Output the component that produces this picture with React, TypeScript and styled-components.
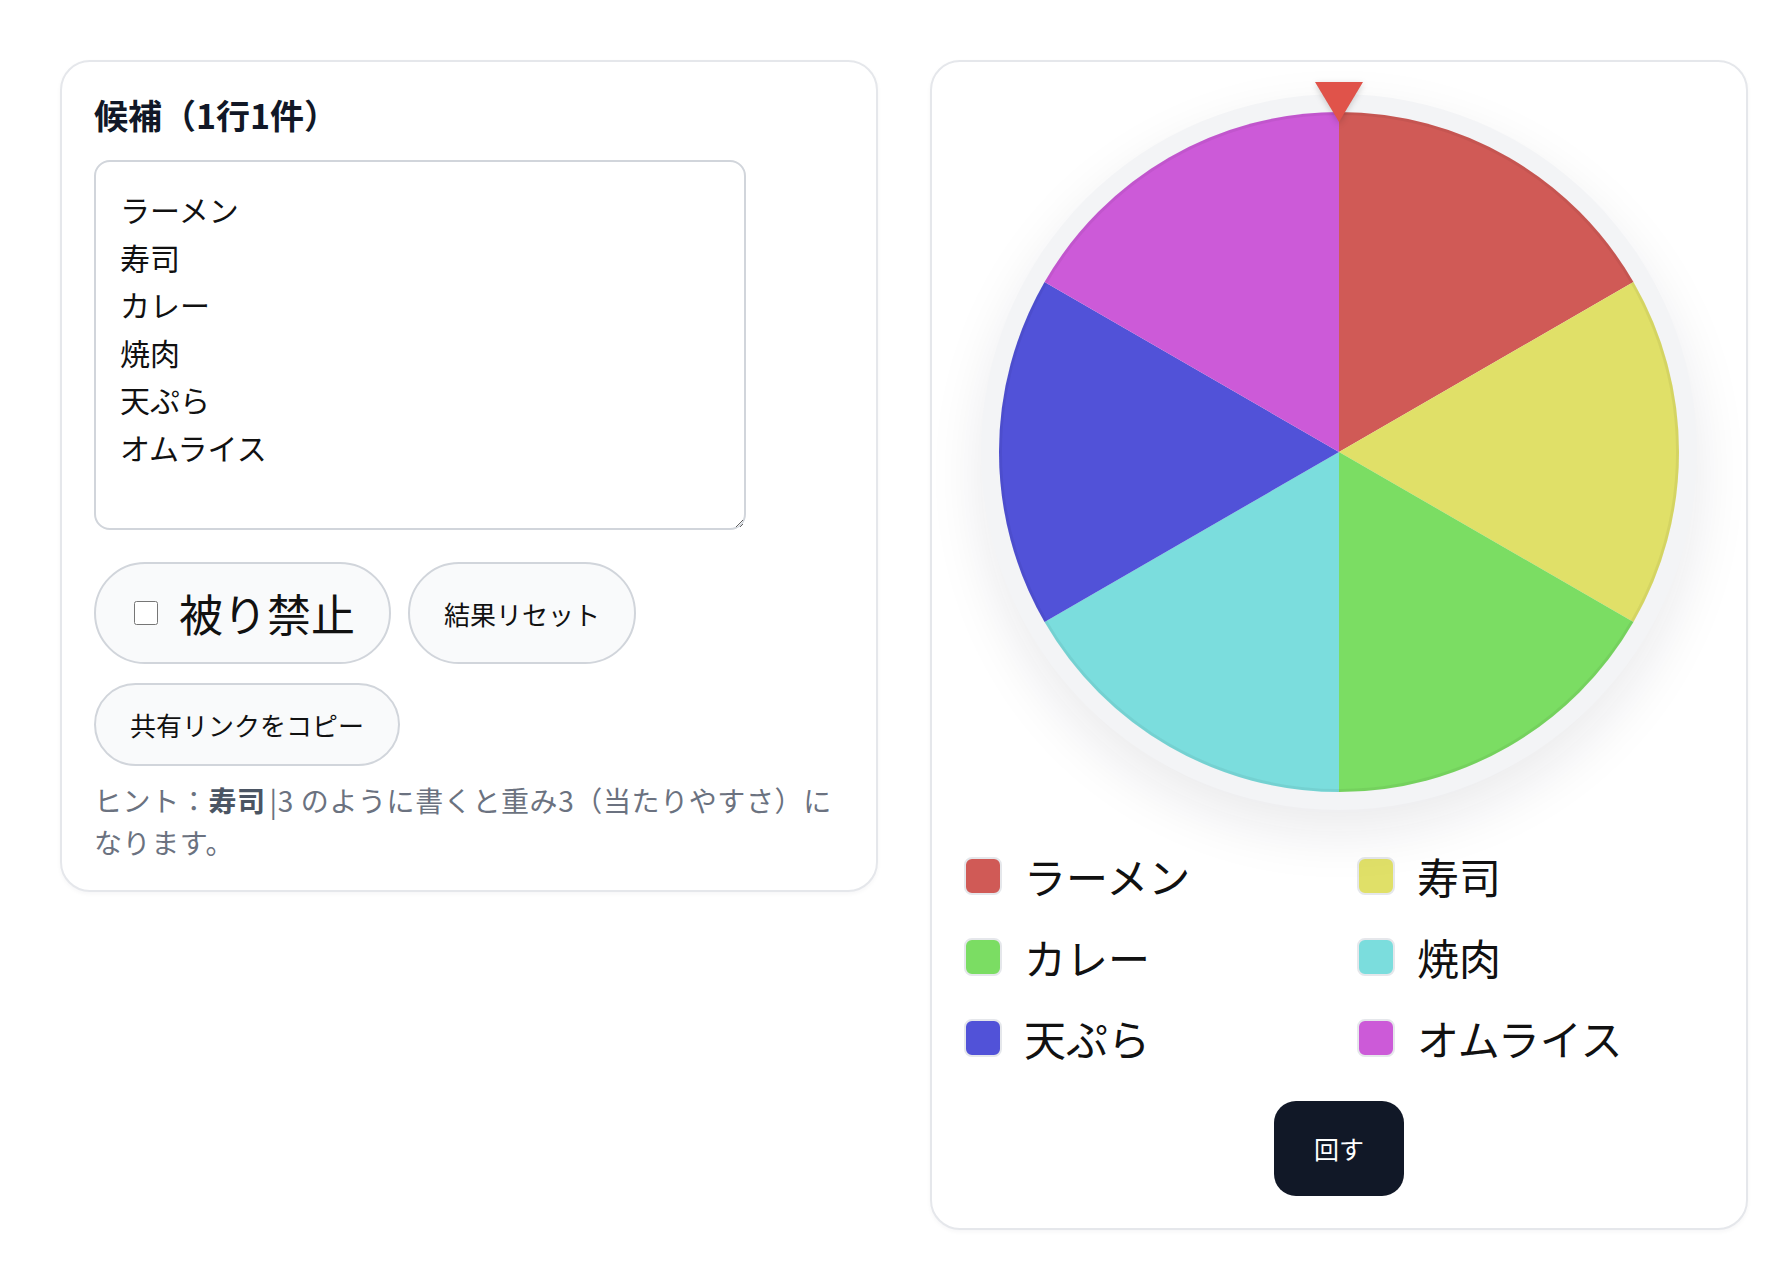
import styled, { createGlobalStyle } from 'styled-components';

const GlobalStyle = createGlobalStyle`
  html, body {
    margin: 0;
    padding: 0;
    background: #fff;
  }
  body {
    font-family: "Noto Sans CJK JP", "Noto Sans", sans-serif;
    color: #111827;
  }
  * {
    box-sizing: border-box;
  }
`;

const items = [
  { name: 'ラーメン', color: '#d05a56' },
  { name: '寿司', color: '#e0e068' },
  { name: 'カレー', color: '#7bdd63' },
  { name: '焼肉', color: '#7bdddd' },
  { name: '天ぷら', color: '#5152d8' },
  { name: 'オムライス', color: '#cc5ad8' },
];

const slicePath = (i: number, n: number, r: number) => {
  const a0 = ((i / n) * 360 - 90) * (Math.PI / 180);
  const a1 = (((i + 1) / n) * 360 - 90) * (Math.PI / 180);
  const x0 = r + r * Math.cos(a0);
  const y0 = r + r * Math.sin(a0);
  const x1 = r + r * Math.cos(a1);
  const y1 = r + r * Math.sin(a1);
  const large = 360 / n > 180 ? 1 : 0;
  return `M${r} ${r} L${x0} ${y0} A${r} ${r} 0 ${large} 1 ${x1} ${y1} Z`;
};

const App = () => {
  const R = 340;
  return (
    <>
      <GlobalStyle />
      <Page>
        <Card $padBottom={27}>
          <Title>候補（1行1件）</Title>
          <Candidates defaultValue={items.map((it) => it.name).join('\n')} />
          <Actions>
            <ToggleLabel>
              <Check type="checkbox" />
              被り禁止
            </ToggleLabel>
            <PillButton>結果リセット</PillButton>
            <PillButton>共有リンクをコピー</PillButton>
          </Actions>
          <Hint>
            ヒント：<b>寿司</b>
            <Weight>|3</Weight> のように書くと重み3（当たりやすさ）になります。
          </Hint>
        </Card>

        <Card $padBottom={32}>
          <WheelArea>
            <Pointer />
            <Ring>
              <svg width={R * 2} height={R * 2} viewBox={`0 0 ${R * 2} ${R * 2}`}>
                {items.map((it, i) => (
                  <path key={it.name} d={slicePath(i, items.length, R)} fill={it.color} />
                ))}
                <circle cx={R} cy={R} r={R - 1.5} fill="none" stroke="rgba(0,0,0,0.05)" strokeWidth={3} />
              </svg>
            </Ring>
          </WheelArea>
          <Legend>
            {items.map((it) => (
              <LegendItem key={it.name}>
                <Swatch $color={it.color} />
                {it.name}
              </LegendItem>
            ))}
          </Legend>
          <SpinButton>回す</SpinButton>
        </Card>
      </Page>
    </>
  );
};

const Page = styled.div`
  display: grid;
  grid-template-columns: 818px 818px;
  column-gap: 52px;
  align-items: start;
  padding: 60px 36px 34px 60px;
`;

const Card = styled.section<{ $padBottom: number }>`
  display: flex;
  flex-direction: column;
  background: #fff;
  border: 2px solid #e5e7eb;
  border-radius: 30px;
  padding: 32px 32px ${(p) => p.$padBottom}px;
  box-shadow: 0 2px 4px rgba(17, 24, 39, 0.04);
`;

const Title = styled.h2`
  margin: 0 0 24px;
  font-size: 34px;
  line-height: 42px;
  font-weight: 700;
  color: #111827;
`;

const Candidates = styled.textarea`
  display: block;
  width: 652px;
  height: 370px;
  padding: 24px;
  border: 2px solid #d1d5db;
  border-radius: 16px;
  font-family: "Noto Sans CJK JP", "Noto Sans", sans-serif;
  font-size: 30px;
  line-height: 47.6px;
  color: #111;
  background: #fff;
  outline: none;
  resize: vertical;
`;

const Actions = styled.div`
  display: flex;
  flex-wrap: wrap;
  column-gap: 17px;
  row-gap: 19px;
  margin-top: 32px;
`;

const PillButton = styled.button`
  display: inline-flex;
  align-items: center;
  padding: 20px 34px;
  border: 2px solid #d1d5db;
  border-radius: 999px;
  background: #f9fafb;
  font-family: "Noto Sans CJK JP", "Noto Sans", sans-serif;
  font-size: 26px;
  line-height: 39px;
  color: #111;
  cursor: pointer;
`;

const ToggleLabel = styled.label`
  display: inline-flex;
  align-items: center;
  gap: 21px;
  padding: 20px 34px;
  border: 2px solid #d1d5db;
  border-radius: 999px;
  background: #f9fafb;
  font-size: 44px;
  line-height: 58px;
  color: #111;
  cursor: pointer;
`;

const Check = styled.input`
  width: 24px;
  height: 24px;
  margin: 0 0 0 4px;
`;

const Hint = styled.p`
  margin: 13px 0 0;
  font-size: 28px;
  line-height: 42px;
  letter-spacing: 0.6px;
  color: #6b7280;
  b {
    font-weight: 700;
    color: #4b5563;
  }
`;

const Weight = styled.span`
  padding-left: 4px;
`;

const WheelArea = styled.div`
  position: relative;
  display: flex;
  justify-content: center;
`;

const Pointer = styled.div`
  position: absolute;
  top: -12px;
  left: 50%;
  transform: translateX(-50%);
  width: 0;
  height: 0;
  border-left: 24px solid transparent;
  border-right: 24px solid transparent;
  border-top: 40px solid #e0534a;
  filter: drop-shadow(0 2px 3px rgba(0, 0, 0, 0.18));
  z-index: 2;
`;

const Ring = styled.div`
  width: 716px;
  height: 716px;
  padding: 18px;
  border-radius: 50%;
  background: #f3f4f6;
  box-shadow: 0 22px 56px rgba(17, 24, 39, 0.09);
  svg {
    display: block;
  }
`;

const Legend = styled.div`
  display: grid;
  grid-template-columns: 1fr 1fr;
  column-gap: 36px;
  row-gap: 22px;
  margin-top: 36px;
`;

const LegendItem = styled.div`
  display: flex;
  align-items: center;
  gap: 22px;
  font-size: 42px;
  line-height: 59px;
  color: #111;
`;

const Swatch = styled.span<{ $color: string }>`
  flex: none;
  width: 38px;
  height: 38px;
  border-radius: 8px;
  border: 2px solid #e5e7eb;
  background: ${(p) => p.$color};
`;

const SpinButton = styled.button`
  align-self: center;
  margin-top: 34px;
  padding: 29px 40px;
  border: none;
  border-radius: 22px;
  background: #111827;
  color: #fff;
  font-family: "Noto Sans CJK JP", "Noto Sans", sans-serif;
  font-size: 25px;
  line-height: 37px;
  cursor: pointer;
`;

export default App;
